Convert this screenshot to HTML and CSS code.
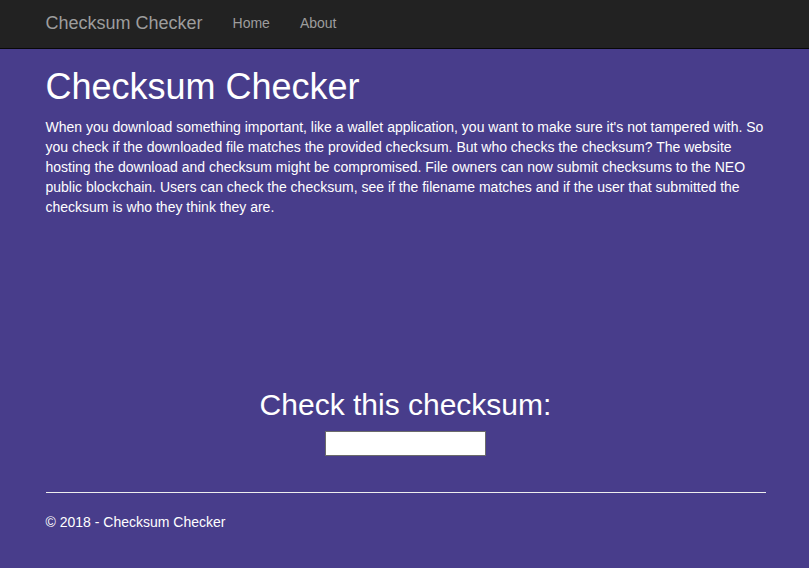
FILE: index.html
```html
<!DOCTYPE html>
<html>
<head>
<meta charset="utf-8">
<title>Checksum Checker</title>
<link rel="stylesheet" href="styles.css">
</head>
<body>
<nav class="navbar">
  <div class="container nav-inner">
    <a class="brand" href="#">Checksum Checker</a>
    <ul class="nav-links">
      <li><a href="#">Home</a></li>
      <li><a href="#">About</a></li>
    </ul>
  </div>
</nav>
<main class="container body-content">
  <h1 class="title">Checksum Checker</h1>
  <p class="intro">When you download something important, like a wallet application, you want to make sure it's not tampered with. So you check if the downloaded file matches the provided checksum. But who checks the checksum? The website hosting the download and checksum might be compromised. File owners can now submit checksums to the NEO public blockchain. Users can check the checksum, see if the filename matches and if the user that submitted the checksum is who they think they are.</p>
  <section class="check">
    <h2 class="check-title">Check this checksum:</h2>
    <input class="check-input" type="text">
  </section>
  <hr class="divider">
  <footer class="footer">
    <p>&copy; 2018 - Checksum Checker</p>
  </footer>
</main>
</body>
</html>
```
FILE: styles.css
```css
* { box-sizing: border-box; }
html, body { margin: 0; padding: 0; }
body {
  background: #483d8b;
  color: #fff;
  font-family: "Liberation Sans", Arial, Helvetica, sans-serif;
  font-size: 14px;
  line-height: 20px;
}
.container {
  width: 750px;
  margin: 0 auto;
  padding: 0 14px 0 16px;
}
.navbar {
  background: #222;
  border-bottom: 1px solid #080808;
  height: 49px;
}
.nav-inner {
  display: flex;
  align-items: flex-start;
}
.brand {
  display: block;
  font-size: 18px;
  line-height: 20px;
  padding: 13px 15px 15px 0;
  color: #9d9d9d;
  text-decoration: none;
}
.nav-links {
  list-style: none;
  margin: 0;
  padding: 0;
  display: flex;
}
.nav-links a {
  display: block;
  padding: 13px 15px 15px;
  color: #9d9d9d;
  text-decoration: none;
  line-height: 20px;
}
.title {
  font-size: 36px;
  line-height: 1.1;
  font-weight: 500;
  margin: 18px 0 10px;
}
.intro {
  margin: 0 0 10px;
}
.check {
  padding-top: 141px;
  display: flex;
  flex-direction: column;
  align-items: center;
}
.check-title {
  font-size: 30px;
  line-height: 33px;
  font-weight: 500;
  margin: 20px 0 10px;
}
.check-input {
  display: block;
  width: 161px;
  height: 25px;
  border: 1px solid #6b6b6b;
  background: #fff;
  padding: 1px 2px;
  margin: 0 0 16px;
}
.divider {
  border: 0;
  border-top: 1px solid #eee;
  margin: 20px 0;
}
.footer p {
  margin: 0 0 9px;
  position: relative;
  top: -1px;
}
```
